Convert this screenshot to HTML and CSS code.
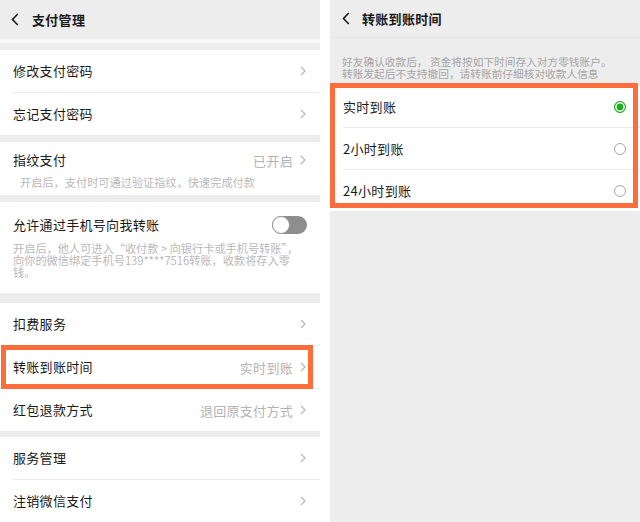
FILE: index.html
```html
<!DOCTYPE html>
<html lang="zh-CN">
<head>
<meta charset="utf-8">
<title>支付管理</title>
<link rel="stylesheet" href="styles.css">
</head>
<body>
<div class="screen">
  <section class="panel left">
    <header class="nav">
      <svg class="back" width="8" height="13" viewBox="0 0 8 13"><path d="M6.8 1 1.5 6.5l5.3 5.5" fill="none" stroke="#1a1a1a" stroke-width="1.6"/></svg>
      <h1>支付管理</h1>
    </header>
    <div class="nav-edge"></div>

    <div class="card">
      <div class="row"><span class="label">修改支付密码</span><svg class="chev" width="6" height="10" viewBox="0 0 6 10"><path d="M1 1l4 4-4 4" fill="none" stroke="#b8b8b8" stroke-width="1.2"/></svg></div>
      <div class="row"><span class="label">忘记支付密码</span><svg class="chev" width="6" height="10" viewBox="0 0 6 10"><path d="M1 1l4 4-4 4" fill="none" stroke="#b8b8b8" stroke-width="1.2"/></svg></div>
    </div>

    <div class="card block fp">
      <div class="head"><span class="label">指纹支付</span><span class="value">已开启</span><svg class="chev" width="6" height="10" viewBox="0 0 6 10"><path d="M1 1l4 4-4 4" fill="none" stroke="#b8b8b8" stroke-width="1.2"/></svg></div>
      <p class="note indent">开启后，支付时可通过验证指纹，快速完成付款</p>
    </div>

    <div class="card block phone">
      <div class="head"><span class="label">允许通过手机号向我转账</span><span class="switch"><span class="knob"></span></span></div>
      <p class="note">开启后，他人可进入“收付款 &gt; 向银行卡或手机号转账”，<br>向你的微信绑定手机号139****7516转账，收款将存入零<br>钱。</p>
    </div>

    <div class="card gap-lg">
      <div class="row"><span class="label">扣费服务</span><svg class="chev" width="6" height="10" viewBox="0 0 6 10"><path d="M1 1l4 4-4 4" fill="none" stroke="#b8b8b8" stroke-width="1.2"/></svg></div>
      <div class="row marked"><span class="label">转账到账时间</span><span class="value">实时到账</span><svg class="chev" width="6" height="10" viewBox="0 0 6 10"><path d="M1 1l4 4-4 4" fill="none" stroke="#b8b8b8" stroke-width="1.2"/></svg><span class="mark mark-left"></span></div>
      <div class="row"><span class="label">红包退款方式</span><span class="value">退回原支付方式</span><svg class="chev" width="6" height="10" viewBox="0 0 6 10"><path d="M1 1l4 4-4 4" fill="none" stroke="#b8b8b8" stroke-width="1.2"/></svg></div>
    </div>

    <div class="card gap-sm">
      <div class="row"><span class="label">服务管理</span><svg class="chev" width="6" height="10" viewBox="0 0 6 10"><path d="M1 1l4 4-4 4" fill="none" stroke="#b8b8b8" stroke-width="1.2"/></svg></div>
      <div class="row"><span class="label">注销微信支付</span><svg class="chev" width="6" height="10" viewBox="0 0 6 10"><path d="M1 1l4 4-4 4" fill="none" stroke="#b8b8b8" stroke-width="1.2"/></svg></div>
    </div>
  </section>

  <section class="panel right">
    <header class="nav nav-r">
      <svg class="back" width="8" height="13" viewBox="0 0 8 13"><path d="M6.8 1 1.5 6.5l5.3 5.5" fill="none" stroke="#1a1a1a" stroke-width="1.6"/></svg>
      <h1>转账到账时间</h1>
    </header>
    <p class="desc">好友确认收款后， 资金将按如下时间存入对方零钱账户。<br>转账发起后不支持撤回，请转账前仔细核对收款人信息</p>
    <div class="options">
      <div class="opt"><span class="label">实时到账</span><span class="radio on"></span></div>
      <div class="opt"><span class="label">2小时到账</span><span class="radio"></span></div>
      <div class="opt"><span class="label">24小时到账</span><span class="radio"></span></div>
      <span class="mark mark-right"></span>
    </div>
  </section>
</div>
</body>
</html>
```

FILE: styles.css
```css
* { box-sizing: border-box; margin: 0; padding: 0; }

body {
  width: 640px;
  height: 522px;
  overflow: hidden;
  background: #fff;
  color: #1a1a1a;
  font-family: "Noto Sans CJK SC", "Noto Sans", sans-serif;
}

.screen {
  display: flex;
  gap: 10px;
  height: 522px;
}

.panel {
  background: #ededed;
  display: flex;
  flex-direction: column;
  overflow: hidden;
}

.left { width: 320px; }
.right { width: 310px; }

.nav {
  height: 39px;
  display: flex;
  align-items: center;
  gap: 13px;
  padding-left: 11px;
}

.nav h1 {
  font-size: 13px;
  font-weight: 700;
  letter-spacing: 0.3px;
  line-height: 18px;
}

.nav-r {
  height: 38px;
  padding-left: 12px;
  gap: 12px;
  border-bottom: 1px solid #e6e6e6;
}

.nav-edge {
  height: 4px;
  background: #f9f9f9;
  margin-bottom: 7px;
}

.card { background: #fff; }
.card + .card { margin-top: 7px; }
.card.gap-lg { margin-top: 10px; }
.card.gap-sm { margin-top: 6px; }

.row {
  position: relative;
  height: 42px;
  margin-left: 13px;
  padding-right: 14px;
  display: flex;
  align-items: center;
  font-size: 13px;
}

.row + .row { border-top: 1px solid #ededed; height: 43px; }

.label {
  flex: 1;
  font-size: 13px;
  letter-spacing: 0.3px;
  line-height: 18px;
  white-space: nowrap;
}

.value {
  color: #b3b3b3;
  font-size: 13px;
  letter-spacing: 0.3px;
  margin-right: 7px;
}

.chev { flex: none; }

.block { padding: 9px 14px 7px 13px; }
.block.phone { padding: 14px 13px 15px 13px; }

.head {
  height: 18px;
  display: flex;
  align-items: center;
}

.note {
  font-size: 11.2px;
  line-height: 12px;
  color: #b9b9b9;
  margin-top: 7px;
  white-space: nowrap;
}

.phone .note { margin-top: 8px; }
.note.indent { padding-left: 7px; }

.switch {
  width: 35px;
  height: 18px;
  border-radius: 9px;
  background: #8e8e8e;
  display: flex;
  align-items: center;
}

.knob {
  width: 18px;
  height: 18px;
  border-radius: 50%;
  background: #fff;
  border: 1px solid #9a9a9a;
}

.mark {
  position: absolute;
  border: 5px solid #fb6d3b;
  pointer-events: none;
  z-index: 2;
}

.mark-left {
  top: -1px;
  bottom: -1px;
  left: -12px;
  right: 7px;
}

.desc {
  padding: 18px 12px 0 12px;
  font-size: 10.7px;
  line-height: 12px;
  color: #a5a5a5;
  white-space: nowrap;
}

.options {
  position: relative;
  margin-top: 6px;
  background: #fff;
}

.opt {
  height: 41px;
  margin-left: 13px;
  padding-right: 14px;
  display: flex;
  align-items: center;
}

.opt + .opt { border-top: 1px solid #ededed; height: 42px; }

.radio {
  width: 12px;
  height: 12px;
  border-radius: 50%;
  border: 1px solid #a6a6a6;
  background: #fff;
}

.radio.on {
  border: 1.2px solid #1aad19;
  background: #1aad19;
  box-shadow: inset 0 0 0 1.6px #fff;
}

.mark-right {
  top: -3px;
  left: 0;
  right: 2px;
  height: 125px;
}
```
